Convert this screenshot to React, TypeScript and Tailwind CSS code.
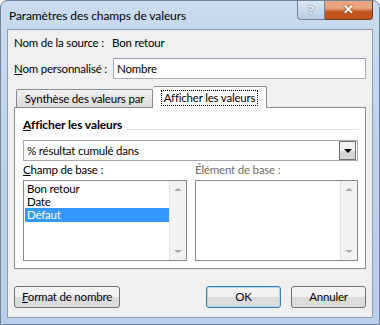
import React from "react";

const font = { fontFamily: 'Lato, "Liberation Sans", sans-serif' };

function ScrollBar() {
  return (
    <div className="flex w-[17px] flex-col justify-between border-l border-dotted border-[#d4d4d4] bg-[#f3f3f3]">
      <div className="flex h-[17px] items-center justify-center">
        <div className="h-0 w-0 border-x-[4px] border-b-[3px] border-x-transparent border-b-[#a8a8a8]" />
      </div>
      <div className="flex h-[17px] items-center justify-center">
        <div className="h-0 w-0 border-x-[4px] border-t-[3px] border-x-transparent border-t-[#a8a8a8]" />
      </div>
    </div>
  );
}

function Btn({ children, isDefault, w }: { children: React.ReactNode; isDefault?: boolean; w: string }) {
  return (
    <button
      className={`flex h-[22px] ${w} items-center justify-center whitespace-nowrap rounded-[3px] border ${
        isDefault ? "border-[#3c7fb1] shadow-[inset_0_0_0_1px_#a6d8f5]" : "border-[#707070]"
      } bg-gradient-to-b from-[#f2f2f2] from-50% to-[#dcdcdc] to-50% text-[11.5px] tracking-[-0.2px] text-black`}
    >
      {children}
    </button>
  );
}

export default function App() {
  return (
    <div className="h-[325px] w-[380px] whitespace-nowrap bg-white" style={font}>
      <div className="flex h-[325px] w-[380px] flex-col rounded-t-[7px] border border-[#6f849e] bg-gradient-to-b from-[#c9dcf0] via-[#bcd3ec] to-[#b8d0ea] px-[6px] pb-[6px]">
        {/* Title bar */}
        <div className="flex h-[28px] items-start justify-between">
          <div className="pl-[2px] pt-[6px] text-[12px] tracking-[-0.1px] text-black">Paramètres des champs de valeurs</div>
          <div className="flex">
            <div className="flex h-[19px] w-[28px] items-center justify-center rounded-bl-[4px] border border-t-0 border-[#6d84a0] bg-gradient-to-b from-[#dbe7f4] to-[#b9cde3] text-[12px] font-bold text-white [text-shadow:0_0_2px_#3a4c66]">
              ?
            </div>
            <div className="flex h-[19px] w-[48px] items-center justify-center rounded-br-[4px] border border-l-0 border-t-0 border-[#6b3b20] bg-gradient-to-b from-[#e8a47c] from-40% to-[#c0541d] to-60% text-[13px] font-bold text-white [text-shadow:0_0_2px_#5a2208]">
              ✕
            </div>
          </div>
        </div>

        {/* Client area */}
        <div className="flex flex-1 flex-col border border-[#8d9db5] bg-[#f0f0f0] px-[6px] pt-[5px] text-[11.5px] tracking-[-0.2px] text-black">
          <div className="flex h-[16px] items-center">
            <span className="w-[98px]">Nom de la source :</span>
            <span>Bon retour</span>
          </div>

          <div className="mt-[7px] flex h-[21px] items-center">
            <span className="w-[99px]">
              <span className="underline">N</span>om personnalisé :
            </span>
            <div className="flex h-[21px] w-[253px] items-center border border-[#abadb3] border-t-[#8e9bb1] bg-white pl-[3px]">
              Nombre
            </div>
          </div>

          {/* Tabs */}
          <div className="mt-[7px] flex h-[21px] items-end pl-[2px]">
            <div className="flex h-[18px] w-[137px] items-center justify-center rounded-t-[2px] border border-b-0 border-[#898c95] bg-gradient-to-b from-[#f2f2f2] to-[#dcdcdc]">
              Synthèse des valeurs par
            </div>
            <div className="relative -mb-px flex h-[22px] w-[114px] items-center justify-center rounded-t-[2px] border border-b-0 border-l-0 border-[#898c95] bg-white">
              <span className="border border-dotted border-black px-[2px] leading-[14px]">Afficher les valeurs</span>
            </div>
          </div>

          <div className="flex h-[162px] w-[352px] flex-col border border-[#898c95] bg-white pb-[7px] pl-[8px] pr-[7px] pt-[8px]">
            <div className="flex h-[17px] items-center gap-[4px]">
              <span className="text-[12px] font-bold tracking-[-0.1px]">
                <span className="underline">A</span>fficher les valeurs
              </span>
              <div className="mt-[9px] h-px flex-1 bg-[#e2e3ea]" />
            </div>

            <div className="mt-[7px] flex h-[21px] items-center border border-[#a4a9b2] bg-white">
              <span className="flex-1 pl-[3px]">% résultat cumulé dans</span>
              <div className="mr-px flex h-[19px] w-[17px] items-center justify-center border border-[#707070] bg-gradient-to-b from-[#f2f2f2] from-50% to-[#d6d6d6] to-50%">
                <div className="h-0 w-0 border-x-[4px] border-t-[4px] border-x-transparent border-t-black" />
              </div>
            </div>

            <div className="mt-px flex h-[16px] items-center">
              <span className="w-[172px]">
                <span className="underline">C</span>hamp de base :
              </span>
              <span className="text-[#6d6d6d]">Élément de base :</span>
            </div>

            <div className="mt-[2px] flex h-[81px] gap-[8px]">
              <div className="flex w-[164px] border border-[#828790] bg-white">
                <div className="flex flex-1 flex-col pl-px pt-px">
                  <div className="h-[13px] pl-[2px] leading-[13px]">Bon retour</div>
                  <div className="h-[13px] pl-[2px] leading-[13px]">Date</div>
                  <div className="h-[14px] bg-[#3399ff] pl-[2px] leading-[14px] text-white">Défaut</div>
                </div>
                <ScrollBar />
              </div>
              <div className="flex w-[163px] border border-[#828790] bg-white">
                <div className="flex-1" />
                <ScrollBar />
              </div>
            </div>
          </div>

          <div className="mt-[17px] flex items-center">
            <Btn w="w-[106px]">
              <span>
                <span className="underline">F</span>ormat de nombre
              </span>
            </Btn>
            <div className="flex-1" />
            <Btn w="w-[75px]" isDefault>
              OK
            </Btn>
            <div className="w-[10px]" />
            <Btn w="w-[75px]">Annuler</Btn>
          </div>
        </div>
      </div>
    </div>
  );
}
